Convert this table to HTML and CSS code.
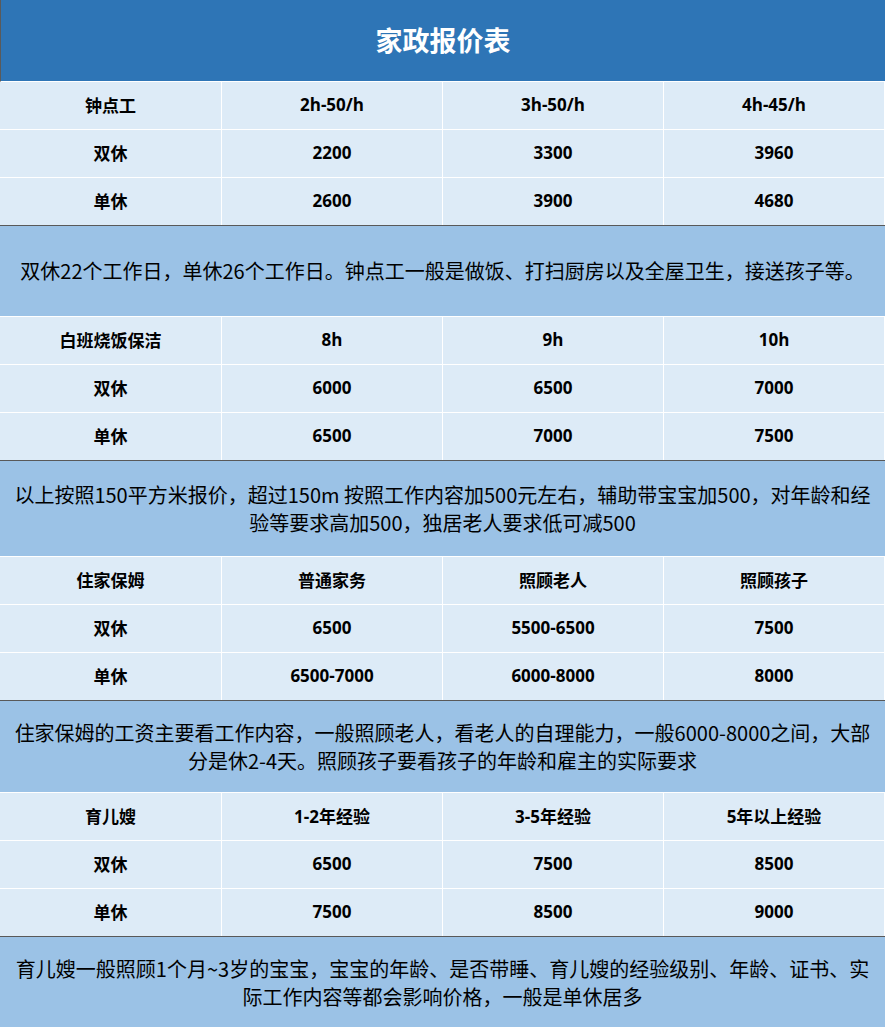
FILE: index.html
```html
<!DOCTYPE html>
<html lang="zh-CN">
<head>
<meta charset="utf-8">
<title>家政报价表</title>
<link rel="stylesheet" href="styles.css">
</head>
<body>
<div class="sheet">
  <div class="title">家政报价表</div>

  <div class="row"><div class="cell">钟点工</div><div class="cell">2h-50/h</div><div class="cell">3h-50/h</div><div class="cell">4h-45/h</div></div>
  <div class="row"><div class="cell">双休</div><div class="cell">2200</div><div class="cell">3300</div><div class="cell">3960</div></div>
  <div class="row"><div class="cell">单休</div><div class="cell">2600</div><div class="cell">3900</div><div class="cell">4680</div></div>
  <div class="note note-a">双休22个工作日，单休26个工作日。钟点工一般是做饭、打扫厨房以及全屋卫生，接送孩子等。</div>

  <div class="row"><div class="cell">白班烧饭保洁</div><div class="cell">8h</div><div class="cell">9h</div><div class="cell">10h</div></div>
  <div class="row"><div class="cell">双休</div><div class="cell">6000</div><div class="cell">6500</div><div class="cell">7000</div></div>
  <div class="row"><div class="cell">单休</div><div class="cell">6500</div><div class="cell">7000</div><div class="cell">7500</div></div>
  <div class="note note-b">以上按照150平方米报价，超过150m 按照工作内容加500元左右，辅助带宝宝加500，对年龄和经验等要求高加500，独居老人要求低可减500</div>

  <div class="row"><div class="cell">住家保姆</div><div class="cell">普通家务</div><div class="cell">照顾老人</div><div class="cell">照顾孩子</div></div>
  <div class="row"><div class="cell">双休</div><div class="cell">6500</div><div class="cell">5500-6500</div><div class="cell">7500</div></div>
  <div class="row"><div class="cell">单休</div><div class="cell">6500-7000</div><div class="cell">6000-8000</div><div class="cell">8000</div></div>
  <div class="note note-c">住家保姆的工资主要看工作内容，一般照顾老人，看老人的自理能力，一般6000-8000之间，大部分是休2-4天。照顾孩子要看孩子的年龄和雇主的实际要求</div>

  <div class="row"><div class="cell">育儿嫂</div><div class="cell">1-2年经验</div><div class="cell">3-5年经验</div><div class="cell">5年以上经验</div></div>
  <div class="row"><div class="cell">双休</div><div class="cell">6500</div><div class="cell">7500</div><div class="cell">8500</div></div>
  <div class="row"><div class="cell">单休</div><div class="cell">7500</div><div class="cell">8500</div><div class="cell">9000</div></div>
  <div class="note note-d">育儿嫂一般照顾1个月~3岁的宝宝，宝宝的年龄、是否带睡、育儿嫂的经验级别、年龄、证书、实际工作内容等都会影响价格，一般是单休居多</div>
</div>
</body>
</html>
```

FILE: styles.css
```css
html, body {
  margin: 0;
  padding: 0;
  background: #ffffff;
}

.sheet {
  width: 885px;
  font-family: "Noto Sans CJK SC", "Noto Sans", sans-serif;
  color: #000000;
}

.title {
  height: 82px;
  box-sizing: border-box;
  background: #2e75b6;
  color: #ffffff;
  font-size: 27px;
  font-weight: 700;
  display: flex;
  align-items: center;
  justify-content: center;
  border-left: 1px solid #5a5a5a;
  border-bottom: 1px solid #ffffff;
  padding-bottom: 2px;
}

.row {
  display: grid;
  grid-template-columns: 221px 220px 220px 220px;
  column-gap: 1px;
  background: #ffffff;
  padding-right: 1px;
  border-bottom: 1px solid #ffffff;
}

.row + .note {
  margin-top: -1px;
}

.cell {
  height: 47px;
  box-sizing: border-box;
  padding-bottom: 3px;
  background: #ddebf7;
  display: flex;
  align-items: center;
  justify-content: center;
  font-family: "Open Sans", "Noto Sans CJK SC", sans-serif;
  font-weight: 700;
  font-size: 17px;
}

.note {
  background: #9bc2e6;
  border-top: 1px solid #595959;
  border-bottom: 1px solid #ffffff;
  display: flex;
  align-items: center;
  justify-content: center;
  text-align: center;
  font-size: 20px;
  line-height: 28px;
  padding: 0 12px;
}

.note-a { height: 90px; }
.note-b { height: 95px; }
.note-c { height: 91px; }
.note-d { height: 91px; border-bottom: none; }
```
